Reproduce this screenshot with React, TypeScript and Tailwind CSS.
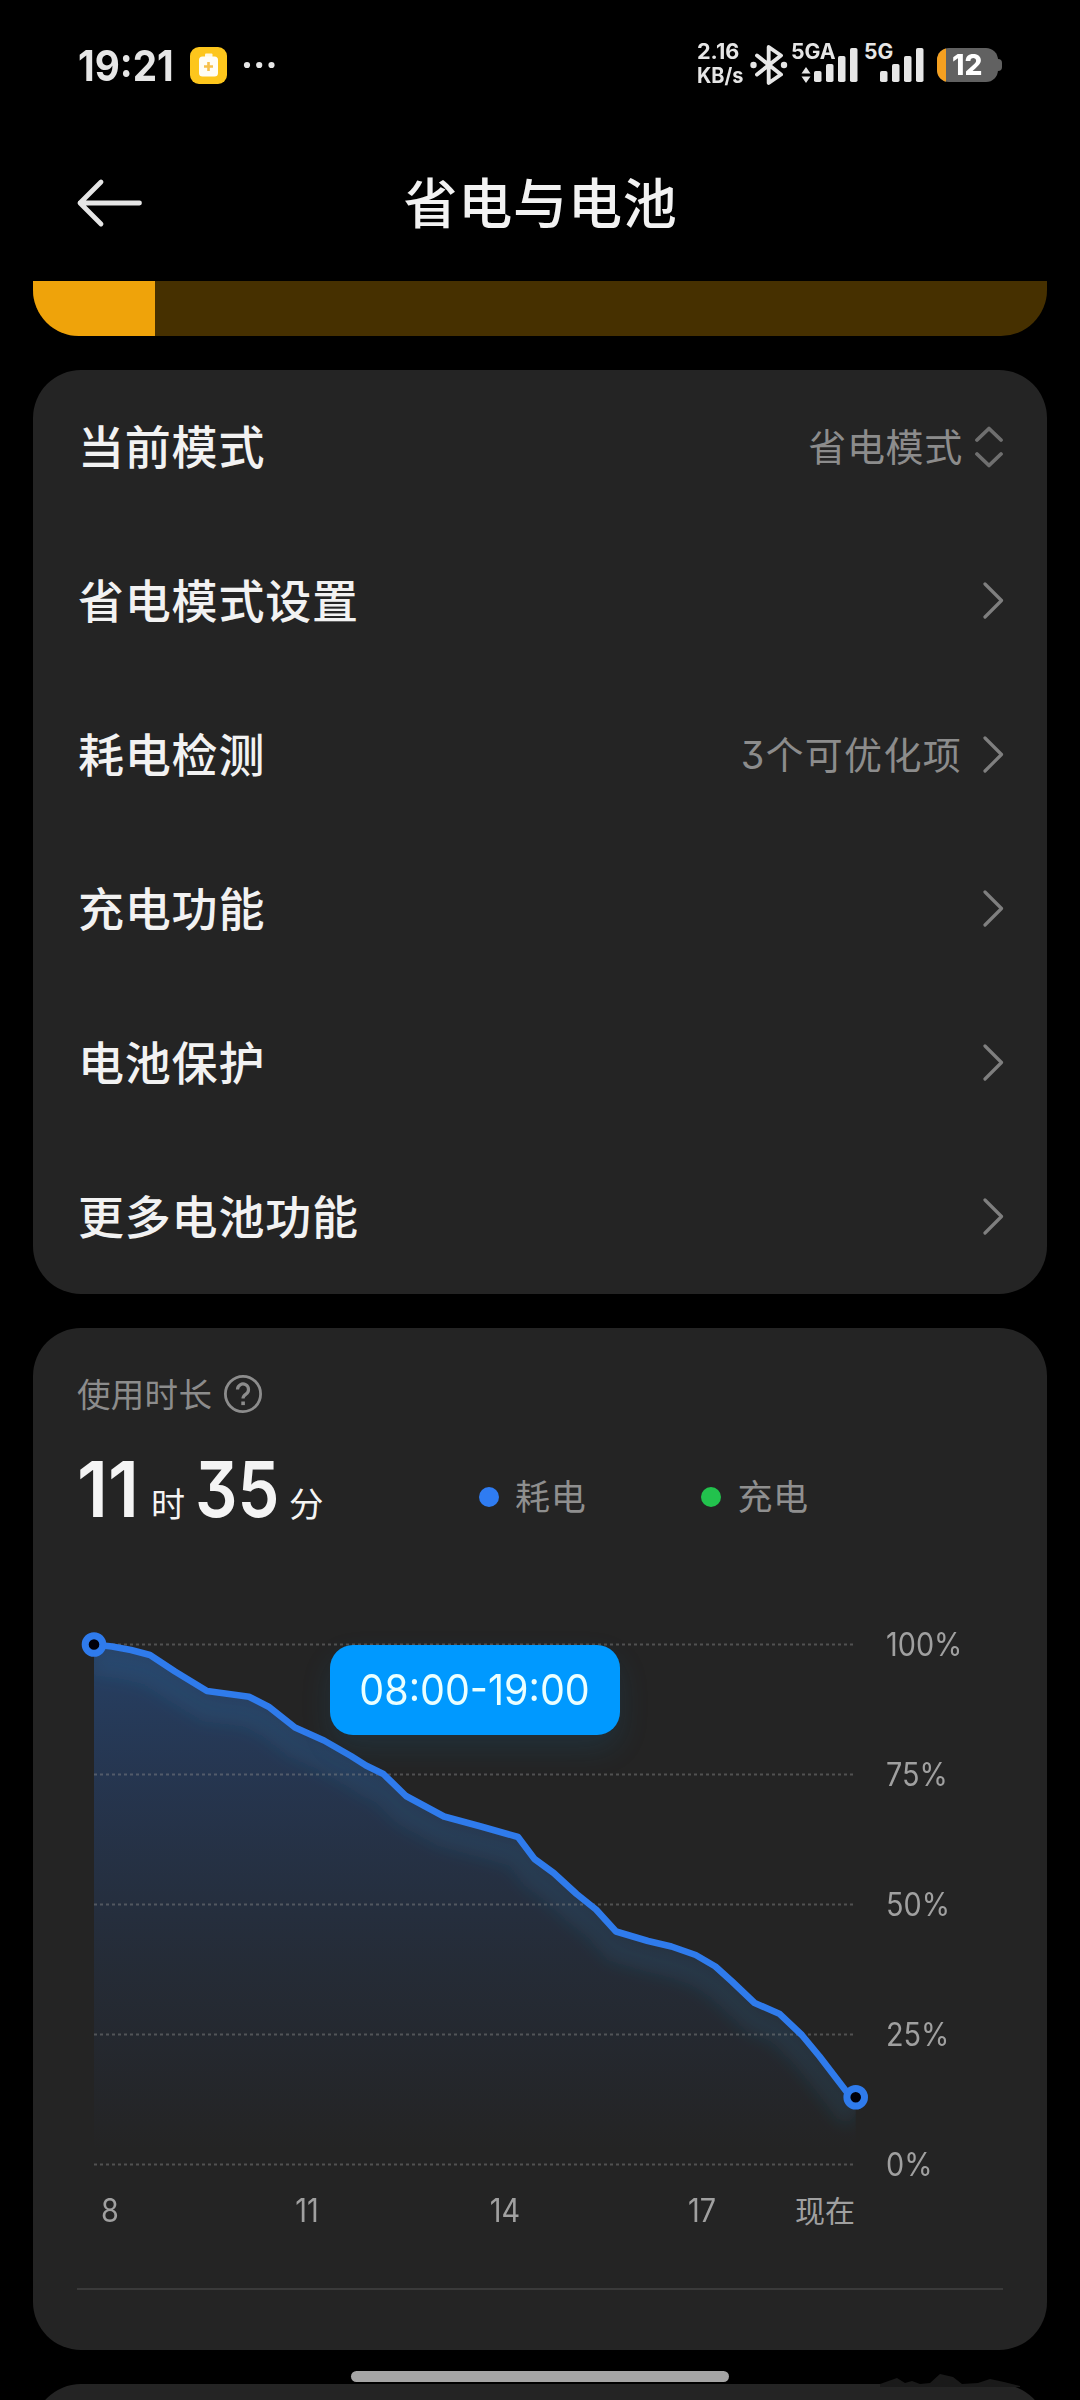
import React from "react";

const rows = [
  { label: "当前模式", value: "省电模式", kind: "select" },
  { label: "省电模式设置" },
  { label: "耗电检测", value: "3个可优化项" },
  { label: "充电功能" },
  { label: "电池保护" },
  { label: "更多电池功能" },
];

const points: [number, number][] = [
  [94, 1644.5], [112, 1646.5], [131, 1650], [150, 1655], [175, 1671.5], [207, 1691], [249, 1696.7],
  [268.6, 1706.7], [295, 1727.5], [324, 1740.5], [351, 1756], [366, 1765.5], [383.4, 1774],
  [406, 1796], [444, 1816.5], [481, 1826.5], [518, 1837], [534.5, 1859], [553.7, 1873],
  [576.6, 1894], [596, 1909.5], [616, 1931.5], [648, 1941], [671.4, 1946.5], [695.7, 1955],
  [715.4, 1966.5], [732, 1981.5], [754.6, 2003], [779.3, 2013.7], [801.8, 2035],
  [819.6, 2056.5], [846.4, 2091.5], [855.7, 2097.3],
];
const line = "M" + points.map((p) => p.join(" ")).join("L");
const area = line + "V2164H94Z";

function Bars() {
  return (
    <svg viewBox="0 0 44 36" className="h-9 w-11 shrink-0" fill="#e6e6e6">
      <rect x="0" y="24" width="7.5" height="11" rx="1.8" />
      <rect x="12" y="17" width="7.5" height="18" rx="1.8" />
      <rect x="24" y="9" width="7.5" height="26" rx="1.8" />
      <rect x="36" y="1" width="7.5" height="34" rx="1.8" />
    </svg>
  );
}

function StatusBar() {
  return (
    <header className="relative flex h-[130px] shrink-0 items-center pl-[78px] pr-[77px] text-[#e6e6e6]">
      <span className="w-[112px] shrink-0 whitespace-nowrap pt-px">
        <span className="inline-block origin-left scale-x-[0.92] text-[42px] font-bold leading-none">19:21</span>
      </span>
      <svg viewBox="0 0 37 37" className="h-[37px] w-[37px] shrink-0">
        <rect width="37" height="37" rx="9" fill="#fdc61c" />
        <rect x="15" y="6.5" width="7.5" height="4" rx="1" fill="#fff8e0" />
        <rect x="9" y="9.5" width="19" height="20" rx="3.5" fill="#fffdf5" />
        <path d="M18.500 15v9M14 19.500h9" stroke="#f7c04a" strokeWidth="2.600" />
      </svg>
      <svg viewBox="0 0 32 8" className="ml-4 h-2 w-8 shrink-0" fill="#e6e6e6">
        <circle cx="4" cy="4" r="3.100" />
        <circle cx="16.200" cy="4" r="3.100" />
        <circle cx="28.500" cy="4" r="3.100" />
      </svg>
      <div className="absolute left-[697px] top-[40px] flex w-[306px]">
        <div className="w-[53px] shrink-0 whitespace-nowrap text-[21px] font-bold leading-[24px]">
          <div className="origin-left scale-x-[1.03]">2.16</div>
          <div className="origin-left scale-x-[0.95]">KB/s</div>
        </div>
        <svg viewBox="0 0 38 44" className="mt-[3px] h-11 w-[38px] shrink-0">
          <path
            d="M7 12.500 31 31.500 18.700 40V4L31 12.500 7 31.500"
            fill="none"
            stroke="#e6e6e6"
            strokeWidth="3.900"
            strokeLinejoin="round"
            strokeLinecap="round"
          />
          <circle cx="3.500" cy="22" r="3.200" fill="#e6e6e6" />
          <circle cx="34" cy="22" r="3.200" fill="#e6e6e6" />
        </svg>
        <div className="relative ml-1 h-11 w-[73px] shrink-0">
          <span className="absolute left-[-1px] top-0 origin-left scale-x-[1.01] text-[21px] font-bold leading-[24px]">5GA</span>
          <svg viewBox="0 0 10 16" className="absolute left-[9px] top-[27px] h-4 w-[10px]" fill="#e6e6e6">
            <path d="M5 0 9.500 6.500h-9zM5 16 .5 9.500h9z" />
          </svg>
          <div className="absolute left-[22px] top-[7px]"><Bars /></div>
        </div>
        <div className="relative h-11 w-[72px] shrink-0">
          <span className="absolute left-[-1px] top-0 text-[21px] font-bold leading-[24px]">5G</span>
          <div className="absolute left-[15px] top-[7px]"><Bars /></div>
        </div>
        <div className="relative mt-2 h-[34px] w-[66px] shrink-0">
          <div className="absolute left-[58px] top-[11px] h-3 w-[7px] rounded-r-[4px] bg-[#616161]" />
          <div className="relative h-[34px] w-[61px] overflow-hidden rounded-[12px] bg-[#616161]">
            <div className="h-full w-[9px] bg-[#f5a020]" />
          </div>
          <span className="absolute left-[15px] top-0 origin-left scale-x-[0.97] text-[29px] font-extrabold leading-[34px] text-white">12</span>
        </div>
      </div>
    </header>
  );
}

function Chevron() {
  return (
    <svg viewBox="0 0 22 38" className="h-[38px] w-[22px]">
      <path d="M3 2 19.500 18.500 3 35" fill="none" stroke="#7f7f7f" strokeWidth="3.200" strokeLinecap="round" strokeLinejoin="round" />
    </svg>
  );
}

function UpDown() {
  return (
    <svg viewBox="0 0 30 42" className="h-[42px] w-[30px]">
      <path d="M3 14 15 2.500 27 14M3 28 15 39.500 27 28" fill="none" stroke="#6f6f6f" strokeWidth="3.800" strokeLinecap="round" strokeLinejoin="round" />
    </svg>
  );
}

function Legend({ label, green }: { label: string; green?: boolean }) {
  return (
    <div className="flex items-center gap-[16px]">
      <span className={green ? "h-5 w-5 rounded-full bg-[#22c24d]" : "h-5 w-5 rounded-full bg-[#2f7cf2]"} />
      <span className="pt-0.5 text-[35px] leading-none tracking-[0.700px] text-[#8f8f8f]">{label}</span>
    </div>
  );
}

function Chart() {
  return (
    <div className="relative flex h-[650px]">
      <svg viewBox="77 1600 800 580" className="h-[580px] w-[800px] shrink-0">
        <defs>
          <linearGradient id="fill" gradientUnits="userSpaceOnUse" x1="0" y1="1644" x2="0" y2="2150">
            <stop offset="0" stopColor="#2a72d8" stopOpacity="0.360" />
            <stop offset="0.300" stopColor="#2a66c8" stopOpacity="0.250" />
            <stop offset="0.650" stopColor="#2a60b8" stopOpacity="0.120" />
            <stop offset="1" stopColor="#2a5cc0" stopOpacity="0" />
          </linearGradient>
          <clipPath id="under"><path d={area} /></clipPath>
          <filter id="soft" x="-10%" y="-10%" width="120%" height="120%">
            <feGaussianBlur stdDeviation="8" />
          </filter>
        </defs>
        <path d={area} fill="url(#fill)" />
        <g clipPath="url(#under)">
          <path d={line} transform="translate(0 17)" fill="none" stroke="#2380b8" strokeOpacity="0.130" strokeWidth="28" filter="url(#soft)" />
        </g>
        {[1644.5, 1774.5, 1904.5, 2034.5, 2164.5].map((y) => (
          <path key={y} d={`M94 ${y}H854`} stroke="#8a8a8a" strokeOpacity="0.450" strokeWidth="2" strokeDasharray="3 3" />
        ))}
        <path d={line} fill="none" stroke="#2f7bec" strokeWidth="6.600" strokeLinejoin="round" />
        {[points[0], points[points.length - 1]].map(([x, y]) => (
          <circle key={x} cx={x} cy={y} r="8.800" fill="#00000a" stroke="#2f7bec" strokeWidth="7" />
        ))}
      </svg>
      <div className="flex flex-col pl-[9px] pt-[25px] text-[32px] text-[#a0a0a0]">
        {["100%", "75%", "50%", "25%", "0%"].map((t) => (
          <div key={t} className="h-[130px] shrink-0 origin-left scale-x-[0.9] leading-[40px]">{t}</div>
        ))}
      </div>
      <div className="absolute left-[253px] top-[45px] flex h-[90px] w-[290px] items-center justify-center rounded-[23px] bg-[#0099ff] shadow-[0_14px_30px_rgba(20,110,170,0.160)]">
        <span className="scale-x-[0.94] whitespace-nowrap text-[42px] leading-none text-[#eaffff]">08:00-19:00</span>
      </div>
      <div className="absolute left-[19px] top-[591px] flex w-[759px] text-[32px] leading-[40px] text-[#a0a0a0]">
        <span className="w-[28px] scale-x-[0.9] text-center">8</span>
        <span className="ml-[163px] w-[40px] scale-x-[0.9] text-center">11</span>
        <span className="ml-[158px] w-[40px] scale-x-[0.9] text-center">14</span>
        <span className="ml-[157px] w-[40px] scale-x-[0.9] text-center">17</span>
        <span className="ml-auto text-[30px]">现在</span>
      </div>
    </div>
  );
}

export default function App() {
  return (
    <div className="relative flex h-[2400px] w-[1080px] flex-col overflow-hidden bg-black font-['Inter','Noto_Sans_CJK_SC',sans-serif] [font-feature-settings:'cv09','case']">
      <StatusBar />
      <div className="relative flex h-[151px] shrink-0 items-start justify-center pt-[47px]">
        <svg viewBox="0 0 68 50" className="absolute left-[76px] top-12 h-[50px] w-[68px]">
          <path d="M63.500 25H4M25 4 4 25 25 46" fill="none" stroke="#e6e6e6" strokeWidth="4.800" strokeLinecap="round" strokeLinejoin="round" />
        </svg>
        <h1 className="pl-px text-[54px] font-medium leading-[56px] tracking-[0.800px] text-[#f2f2f2]">省电与电池</h1>
      </div>

      <main className="flex shrink-0 flex-col gap-[34px] px-[33px]">
        <div className="flex h-[55px] shrink-0 overflow-hidden rounded-b-[46px] bg-[#463000]">
          <div className="w-[122px] bg-[#efa30a]" />
        </div>

        <section className="flex shrink-0 flex-col rounded-[48px] bg-[#242424]">
          {rows.map((r) => (
            <div key={r.label} className="flex h-[154px] items-center justify-between pl-[45px] pr-[43px]">
              <span className="text-[46px] font-medium leading-none tracking-[0.800px] text-[#f2f2f2]">{r.label}</span>
              <div className="flex items-center">
                {r.value && (
                  <span
                    className={
                      r.kind
                        ? "mr-[11px] text-[38px] leading-none tracking-[0.700px] text-[#8c8c8c]"
                        : "mr-[20px] text-[38px] leading-none tracking-[1.300px] text-[#8c8c8c]"
                    }
                  >
                    {r.value}
                  </span>
                )}
                {r.kind ? <UpDown /> : <Chevron />}
              </div>
            </div>
          ))}
        </section>

        <section className="flex h-[1022px] shrink-0 flex-col rounded-[48px] bg-[#242424] px-11 pt-[46px]">
          <div className="flex h-10 items-center gap-[11px]">
            <span className="pt-[3px] text-[33.500px] leading-none tracking-[0.300px] text-[#8c8c8c]">使用时长</span>
            <svg viewBox="0 0 40 40" className="h-10 w-10">
              <circle cx="20" cy="20" r="17.600" fill="none" stroke="#8c8c8c" strokeWidth="2.800" />
              <path d="M14.500 15.500a5.500 5.500 0 1 1 8.500 4.600c-2 1.400-3 2.200-3 4.400" fill="none" stroke="#8c8c8c" strokeWidth="3.200" />
              <rect x="18.300" y="27.500" width="3.600" height="3.600" fill="#8c8c8c" />
            </svg>
          </div>
          <div className="flex h-[142px] items-start">
            <div className="mt-[37px] flex w-[402px] items-baseline whitespace-nowrap leading-[77px] text-[#f4f4f4]">
              <span className="w-[74px]"><span className="inline-block origin-left scale-x-[0.95] text-[77px] font-semibold">11</span></span>
              <span className="w-[44px] text-[34px]">时</span>
              <span className="w-[94px]"><span className="inline-block origin-left scale-x-[0.865] text-[77px] font-semibold">35</span></span>
              <span className="text-[34.500px]">分</span>
            </div>
            <div className="mt-[64px] flex gap-[115px]">
              <Legend label="耗电" />
              <Legend label="充电" green />
            </div>
          </div>
          <div className="mt-[44px]"><Chart /></div>
          <div className="mt-[38px] h-[2px] shrink-0 bg-[#3a3a3a]" />
        </section>

        <section className="relative h-[120px] shrink-0 rounded-[48px] bg-[#242424]">
          <svg viewBox="0 0 150 14" className="absolute left-[847px] top-[-11px] h-[14px] w-[150px]">
            <path d="M0 14V11L17 5 25 10 32 8 40 11 50 10 60 1 73 4 82 11 98 10 110 6 124 9 140 13V14Z" fill="#1a1a1a" />
          </svg>
        </section>
      </main>

      <div className="absolute left-[351px] top-[2371px] h-[11px] w-[378px] rounded-full bg-[#a5a5a5]" />
    </div>
  );
}
